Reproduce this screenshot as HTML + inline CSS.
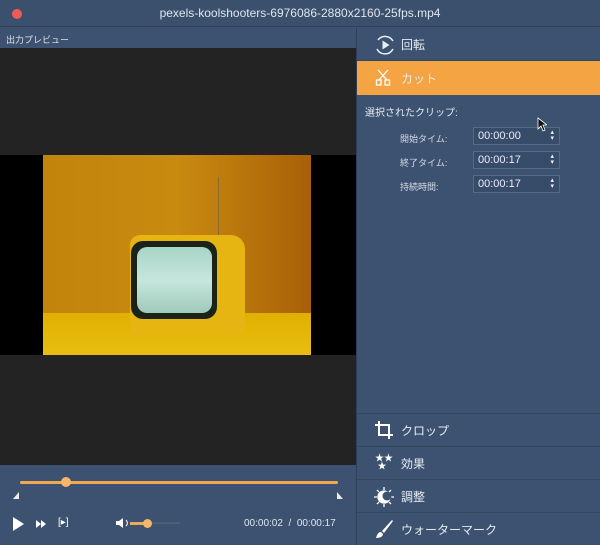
<!DOCTYPE html>
<html><head><meta charset="utf-8"><style>
*{margin:0;padding:0;box-sizing:border-box}
body{width:600px;height:545px;overflow:hidden;background:#3c5270;font-family:"Liberation Sans","Noto Sans CJK JP",sans-serif;color:#e6ebf2;position:relative}
.abs{position:absolute}
.title{left:0;top:0;width:600px;height:27px;background:#3b506c;border-bottom:1px solid #2f4058;text-align:center;font-size:12px;line-height:27px;color:#dfe5ee}
.dot{left:12px;top:9px;width:10px;height:10px;border-radius:50%;background:#f05a55}
.row{left:357px;width:243px;border-bottom:1px solid #33475f;font-size:12px;display:flex;align-items:center}
.row span{position:absolute;left:44px}
.lbl{font-size:9px;color:#d5dbe4}
.field{left:473px;width:87px;height:18px;border:1px solid #56698a;background:#34486390;font-size:11px;line-height:16px;padding-left:4px;color:#eef}
.field i{position:absolute;right:5px;top:2px;font-style:normal;font-size:7px;line-height:6px}
</style></head><body>
<div class="abs title">pexels-koolshooters-6976086-2880x2160-25fps.mp4</div>
<div class="abs dot"></div>
<div class="abs" style="left:6px;top:33px;font-size:9px;color:#dde3ec">出力プレビュー</div>
<div class="abs" style="left:0;top:48px;width:356px;height:417px;background:#232323"></div>
<div class="abs" style="left:0;top:155px;width:356px;height:200px;background:#000"></div>
<div class="abs" style="left:43px;top:155px;width:268px;height:200px;overflow:hidden;background:linear-gradient(90deg,#c2840c 0%,#c98a10 50%,#a86008 100%)">
  <div class="abs" style="left:0;top:158px;width:268px;height:42px;background:linear-gradient(#e0b000,#e8be10)"></div>
  <div class="abs" style="left:175px;top:22px;width:1px;height:60px;background:#8a6a30"></div>
  <div class="abs" style="left:87px;top:80px;width:115px;height:100px;background:#e7b512;border-radius:10px 14px 8px 8px"></div>
  <div class="abs" style="left:88px;top:86px;width:86px;height:78px;background:#1b2218;border-radius:12px"></div>
  <div class="abs" style="left:94px;top:92px;width:75px;height:66px;background:linear-gradient(#a7d4c7,#c6e6dc,#9fcabc);border-radius:10px"></div>
</div>
<div class="abs" style="left:356px;top:28px;width:1px;height:517px;background:#2e4058"></div>
<div class="abs row" style="top:28px;height:33px"><svg class="abs" style="left:16px;top:5px" width="24" height="24" viewBox="0 0 24 24" fill="none" stroke="#e8edf3" stroke-width="1.5"><path d="M5 7A9 9 0 0 1 20 8M20 16A9 9 0 0 1 4 16"/><path d="M9.5 7.5v9l7-4.5z" fill="#e8edf3" stroke="none"/></svg><span>回転</span></div>
<div class="abs row" style="top:61px;height:34px;background:#f4a443;border:0"><svg class="abs" style="left:18px;top:8px" width="16" height="18" viewBox="0 0 16 18" fill="none" stroke="#fff" stroke-width="1.3"><path d="M3 1l9 10M13 1L4 11"/><rect x="1.5" y="11" width="4.5" height="5"/><rect x="10" y="11" width="4.5" height="5"/></svg><span>カット</span></div>
<div class="abs" style="left:365px;top:104px;font-size:10px">選択されたクリップ:</div>
<div class="abs lbl" style="left:400px;top:132px">開始タイム:</div>
<div class="abs lbl" style="left:400px;top:156px">終了タイム:</div>
<div class="abs lbl" style="left:400px;top:180px">持続時間:</div>
<div class="abs field" style="top:127px">00:00:00<i>▴<br>▾</i></div>
<div class="abs field" style="top:151px">00:00:17<i>▴<br>▾</i></div>
<div class="abs field" style="top:175px">00:00:17<i>▴<br>▾</i></div>
<svg class="abs" style="left:537px;top:117px" width="10" height="15" viewBox="0 0 10 15"><path d="M1 1v11l3-3 2 5 2-1-2-5h4z" fill="#111" stroke="#fff" stroke-width="0.8"/></svg>
<div class="abs" style="left:357px;top:413px;width:243px;height:1px;background:#33475f"></div>
<div class="abs row" style="top:414px;height:33px"><svg class="abs" style="left:17px;top:6px" width="20" height="20" viewBox="0 0 20 20" fill="none" stroke="#fff" stroke-width="2"><path d="M5 1v14h14M1 5h14v14"/></svg><span>クロップ</span></div>
<div class="abs row" style="top:447px;height:33px"><div class="abs" style="left:18px;top:7px;font-size:9px;line-height:8px;color:#fff">★★<br>&nbsp;★</div><span>効果</span></div>
<div class="abs row" style="top:480px;height:33px"><svg class="abs" style="left:15px;top:5px" width="24" height="24" viewBox="0 0 24 24" fill="none" stroke="#fff" stroke-width="1.3"><circle cx="12" cy="12" r="6" fill="#fff"/><path d="M12 2v3M12 19v3M2 12h3M19 12h3M5 5l2 2M17 17l2 2M5 19l2-2M17 7l2-2"/><circle cx="15" cy="11" r="4.5" fill="#3c5270" stroke="none"/></svg><span>調整</span></div>
<div class="abs row" style="top:513px;height:32px;border:0"><svg class="abs" style="left:17px;top:6px" width="20" height="20" viewBox="0 0 20 20"><path d="M18 1L8 12l2 2L19 2z" fill="#fff"/><path d="M7 13c-3 0-4 3-5 6 3 0 7-1 7-4z" fill="#fff"/></svg><span>ウォーターマーク</span></div>
<div class="abs" style="left:20px;top:481px;width:318px;height:3px;background:#f0a950;border-radius:2px"></div>
<div class="abs" style="left:61px;top:477px;width:10px;height:10px;border-radius:50%;background:#f5b66a"></div>
<div class="abs" style="left:13px;top:492px;width:0;height:0;border-left:6px solid transparent;border-bottom:7px solid #eee"></div>
<div class="abs" style="left:337px;top:492px;width:0;height:0;border-right:6px solid transparent;border-bottom:7px solid #eee"></div>
<div class="abs" style="left:13px;top:517px;width:0;height:0;border-left:11px solid #fff;border-top:7px solid transparent;border-bottom:7px solid transparent"></div>
<svg class="abs" style="left:36px;top:520px" width="11" height="8" viewBox="0 0 11 8"><path d="M0 0l5 4-5 4zM5 0l5 4-5 4z" fill="#fff"/></svg>
<div class="abs" style="left:58px;top:517px;font-size:10px;color:#fff">[▸]</div>
<svg class="abs" style="left:116px;top:518px" width="14" height="10" viewBox="0 0 14 10"><path d="M0 3h3l4-3v10l-4-3H0z" fill="#fff"/><path d="M10 2a4 4 0 0 1 0 6" stroke="#fff" fill="none"/></svg>
<div class="abs" style="left:130px;top:522px;width:18px;height:3px;background:#f0a950"></div>
<div class="abs" style="left:148px;top:522px;width:32px;height:2px;background:#4a5e7a"></div>
<div class="abs" style="left:143px;top:519px;width:9px;height:9px;border-radius:50%;background:#f5b66a"></div>
<div class="abs" style="left:244px;top:518px;font-size:10px;color:#dfe5ee">00:00:02 &nbsp;/ &nbsp;00:00:17</div>
</body></html>
